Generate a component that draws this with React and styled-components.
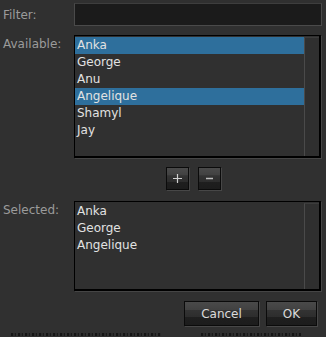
import React from "react";
import styled, { createGlobalStyle } from "styled-components";

const GlobalStyle = createGlobalStyle`
  html, body {
    margin: 0;
    padding: 0;
    background: #303030;
  }
  body {
    font-family: "DejaVu Sans", "Liberation Sans", sans-serif;
  }
`;

const Dialog = styled.div`
  width: 326px;
  height: 337px;
  box-sizing: border-box;
  padding: 3px 4px 0 3px;
  display: flex;
  flex-direction: column;
  background: #303030;
  overflow: hidden;
`;

const Row = styled.div`
  display: grid;
  grid-template-columns: 71px 1fr;
  align-items: ${(p) => (p.$top ? "start" : "center")};
  margin-top: ${(p) => p.$mt || 0}px;
`;

const Label = styled.label`
  font-size: 12px;
  color: #9b9b9b;
  padding-top: ${(p) => p.$pt || 0}px;
`;

const FilterInput = styled.input`
  height: 23px;
  box-sizing: border-box;
  background: #1b1b1b;
  border: 1px solid #4a4a4a;
  border-top-color: #3e3e3e;
  margin: 0;
  padding: 0 4px;
  color: #ddd;
  font: inherit;
  font-size: 12px;
  outline: none;
`;

const ListBox = styled.div`
  height: ${(p) => p.$h}px;
  box-sizing: border-box;
  width: 247px;
  border: 1px solid #000;
  border-right-width: 2px;
  border-bottom-width: 2px;
  box-shadow: 1px 1px 0 #454545;
  display: flex;
  background: #303030;
`;

const Items = styled.ul`
  list-style: none;
  margin: 0;
  padding: 1px 0 0;
  flex: 1;
`;

const Item = styled.li`
  height: 17px;
  line-height: 17px;
  font-size: 12px;
  padding-left: 2px;
  color: #e2e2e2;
  background: ${(p) => (p.$selected ? "#2e6f9c" : "transparent")};
`;

const Track = styled.div`
  width: 14px;
  margin-top: 1px;
  border-left: 1px solid #4a4a4a;
  border-top: 1px solid #3c3c3c;
  background: #2f2f2f;
`;

const ToolRow = styled.div`
  display: flex;
  gap: 9px;
  margin: 9px 0 0 163px;
`;

const Btn = styled.button`
  width: ${(p) => p.$w}px;
  height: ${(p) => p.$h || 23}px;
  box-sizing: border-box;
  margin: 0;
  padding: 0;
  border: 1px solid #0b0b0b;
  box-shadow: 1px 1px 0 #474747;
  background: linear-gradient(
    #4a4a4a 0%,
    #414141 35%,
    #333333 36%,
    #2d2d2d 65%,
    #1f1f1f 66%,
    #1c1c1c 100%
  );
  color: #dadada;
  font-family: "DejaVu Sans", "Liberation Sans", sans-serif;
  font-size: 12px;
  display: flex;
  align-items: center;
  justify-content: center;
`;

const Footer = styled.div`
  display: flex;
  justify-content: flex-end;
  gap: 7px;
  margin-top: 10px;
  padding-right: 5px;
`;

/* edge of the window behind the dialog peeking out at the bottom */
const BehindEdge = styled.div`
  margin-top: 7px;
  display: flex;
  gap: 40px;
  padding-left: 8px;
`;

const Smudge = styled.div`
  width: ${(p) => p.$w}px;
  height: 3px;
  background: repeating-linear-gradient(
    90deg,
    #151515 0 2px,
    #2a2a2a 2px 4px,
    #1a1a1a 4px 5px,
    #303030 5px 7px
  );
`;

const available = [
  { name: "Anka", selected: true },
  { name: "George" },
  { name: "Anu" },
  { name: "Angelique", selected: true },
  { name: "Shamyl" },
  { name: "Jay" },
];

const selected = ["Anka", "George", "Angelique"];

export default function App() {
  return (
    <>
      <GlobalStyle />
      <Dialog>
        <Row>
          <Label>Filter:</Label>
          <FilterInput />
        </Row>
        <Row $top $mt={9}>
          <Label $pt={2}>Available:</Label>
          <ListBox $h={123}>
            <Items>
              {available.map((a) => (
                <Item key={a.name} $selected={a.selected}>
                  {a.name}
                </Item>
              ))}
            </Items>
            <Track />
          </ListBox>
        </Row>
        <ToolRow>
          <Btn $w={23}>
            <svg width="11" height="11" viewBox="0 0 11 11">
              <path d="M5.5 1v9M1 5.5h9" stroke="#cfcfcf" strokeWidth="1.2" />
            </svg>
          </Btn>
          <Btn $w={23}>
            <svg width="11" height="11" viewBox="0 0 11 11">
              <path d="M2 5.5h7" stroke="#bdbdbd" strokeWidth="1.5" />
            </svg>
          </Btn>
        </ToolRow>
        <Row $top $mt={11}>
          <Label $pt={2}>Selected:</Label>
          <ListBox $h={90}>
            <Items>
              {selected.map((s) => (
                <Item key={s}>{s}</Item>
              ))}
            </Items>
            <Track />
          </ListBox>
        </Row>
        <Footer>
          <Btn $w={75} $h={25}>Cancel</Btn>
          <Btn $w={51} $h={25}>OK</Btn>
        </Footer>
        <BehindEdge>
          <Smudge $w={150} />
          <Smudge $w={100} />
        </BehindEdge>
      </Dialog>
    </>
  );
}
